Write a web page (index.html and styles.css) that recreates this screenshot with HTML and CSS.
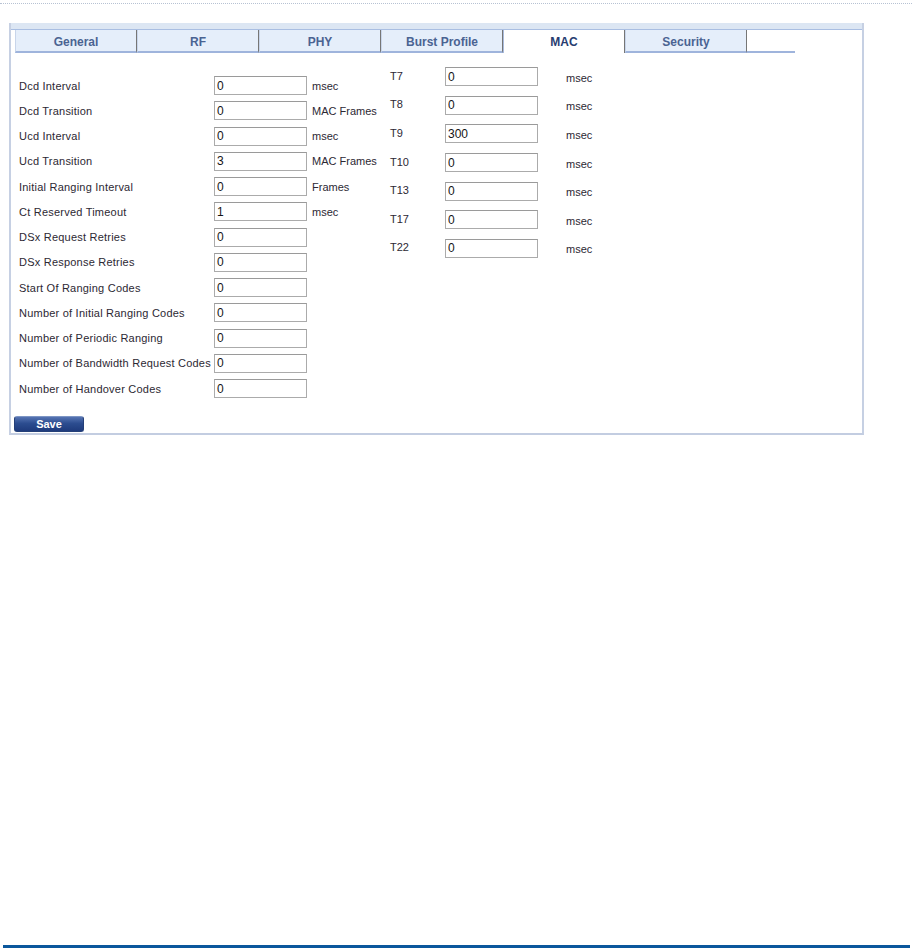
FILE: index.html
```html
<!DOCTYPE html>
<html>
<head>
<meta charset="utf-8">
<title>MAC</title>
<link rel="stylesheet" href="styles.css">
</head>
<body>
<div class="topline"></div>
<div class="panel">
  <div class="strip"></div>
  <div class="tabs">
    <div class="tab">General</div>
    <div class="tab">RF</div>
    <div class="tab">PHY</div>
    <div class="tab">Burst Profile</div>
    <div class="tab active">MAC</div>
    <div class="tab">Security</div>
    <div class="tabfill"></div>
  </div>
  <div class="form">
    <div class="leftcol">
      <label>Dcd Interval</label><input class="field" value="0"><span class="unit">msec</span>
      <label>Dcd Transition</label><input class="field" value="0"><span class="unit">MAC Frames</span>
      <label>Ucd Interval</label><input class="field" value="0"><span class="unit">msec</span>
      <label>Ucd Transition</label><input class="field" value="3"><span class="unit">MAC Frames</span>
      <label>Initial Ranging Interval</label><input class="field" value="0"><span class="unit">Frames</span>
      <label>Ct Reserved Timeout</label><input class="field" value="1"><span class="unit">msec</span>
      <label>DSx Request Retries</label><input class="field" value="0"><span class="unit"></span>
      <label>DSx Response Retries</label><input class="field" value="0"><span class="unit"></span>
      <label>Start Of Ranging Codes</label><input class="field" value="0"><span class="unit"></span>
      <label>Number of Initial Ranging Codes</label><input class="field" value="0"><span class="unit"></span>
      <label>Number of Periodic Ranging</label><input class="field" value="0"><span class="unit"></span>
      <label>Number of Bandwidth Request Codes</label><input class="field" value="0"><span class="unit"></span>
      <label>Number of Handover Codes</label><input class="field" value="0"><span class="unit"></span>
    </div>
    <div class="rightcol">
      <label class="tlabel">T7</label><input class="field" value="0"><span class="unit">msec</span>
      <label class="tlabel">T8</label><input class="field" value="0"><span class="unit">msec</span>
      <label class="tlabel">T9</label><input class="field" value="300"><span class="unit">msec</span>
      <label class="tlabel">T10</label><input class="field" value="0"><span class="unit">msec</span>
      <label class="tlabel">T13</label><input class="field" value="0"><span class="unit">msec</span>
      <label class="tlabel">T17</label><input class="field" value="0"><span class="unit">msec</span>
      <label class="tlabel">T22</label><input class="field" value="0"><span class="unit">msec</span>
    </div>
  </div>
  <div class="actions">
    <button class="save">Save</button>
  </div>
</div>
<div class="footer"></div>
</body>
</html>
```
FILE: styles.css
```css
html, body {
  margin: 0;
  padding: 0;
}
body {
  min-height: 100vh;
  display: flex;
  flex-direction: column;
  font-family: "Liberation Sans", Arial, sans-serif;
  background: #ffffff;
  color: #2e2a33;
}
.topline {
  margin-top: 3px;
  border-top: 1px dotted #b7c2d3;
}
.panel {
  margin: 19px 0 0 9px;
  width: 855px;
  box-sizing: border-box;
  border-left: 2px solid #c6d0e3;
  border-right: 2px solid #c6d0e3;
  border-bottom: 2px solid #c3cde1;
}
.strip {
  height: 6px;
  background: #dce6f3;
  border-bottom: 1px solid #a9bee2;
}
.tabs {
  display: flex;
  padding-left: 4px;
  height: 23px;
}
.tab {
  width: 122px;
  box-sizing: border-box;
  height: 23px;
  padding-top: 1px;
  background: #e5eefa;
  border-left: 1px solid #c8d5ea;
  border-right: 1px solid #767676;
  border-bottom: 2px solid #9fb4dc;
  font-size: 12px;
  font-weight: bold;
  color: #4a6392;
  text-align: center;
  line-height: 22px;
}
.tab.active {
  background: #ffffff;
  border-left: 1px solid #a9bbdd;
  border-bottom: none;
  color: #283c70;
}
.tabfill {
  width: 48px;
  height: 23px;
  box-sizing: border-box;
  border-bottom: 2px solid #9fb4dc;
}
.form {
  display: flex;
  align-items: flex-start;
  padding: 9.5px 0 0 8px;
}
.leftcol {
  margin-top: 10.4px;
  display: grid;
  grid-template-columns: 195px 93px 83px;
  grid-auto-rows: 25.25px;
  align-items: center;
  width: 371px;
}
.leftcol label {
  letter-spacing: 0.22px;
}
.leftcol .unit {
  padding-left: 5px;
}
.rightcol {
  display: grid;
  grid-template-columns: 55px 93px 60px;
  grid-auto-rows: 28.6px;
  align-items: center;
}
.rightcol .unit {
  padding-left: 28px;
  padding-top: 2px;
}
.tlabel {
  padding-bottom: 2px;
}
label {
  font-size: 11px;
  white-space: nowrap;
  color: #2c2833;
}
.unit {
  font-size: 11px;
  white-space: nowrap;
  color: #2c2833;
}
.field {
  box-sizing: border-box;
  width: 93px;
  height: 19px;
  margin: 0;
  padding: 0 0 0 2px;
  border: 1px solid #ababab;
  border-top-color: #9a9a9a;
  font-family: "Liberation Sans", Arial, sans-serif;
  font-size: 12px;
  color: #151515;
  background: #ffffff;
  outline: none;
}
.actions {
  padding: 15px 0 1px 3px;
}
.save {
  display: block;
  width: 70px;
  height: 16px;
  margin: 0;
  padding: 0;
  box-sizing: border-box;
  border: 1px solid #243f78;
  border-top-color: #7d95c4;
  border-radius: 3px;
  background: linear-gradient(#5674b3, #2c4d90 45%, #1e3a7c);
  color: #ffffff;
  font-family: "Liberation Sans", Arial, sans-serif;
  font-size: 11px;
  font-weight: bold;
  line-height: 13px;
  text-align: center;
}
.footer {
  margin: auto 2px 0 3px;
  height: 3px;
  background: #0b579c;
}
```
